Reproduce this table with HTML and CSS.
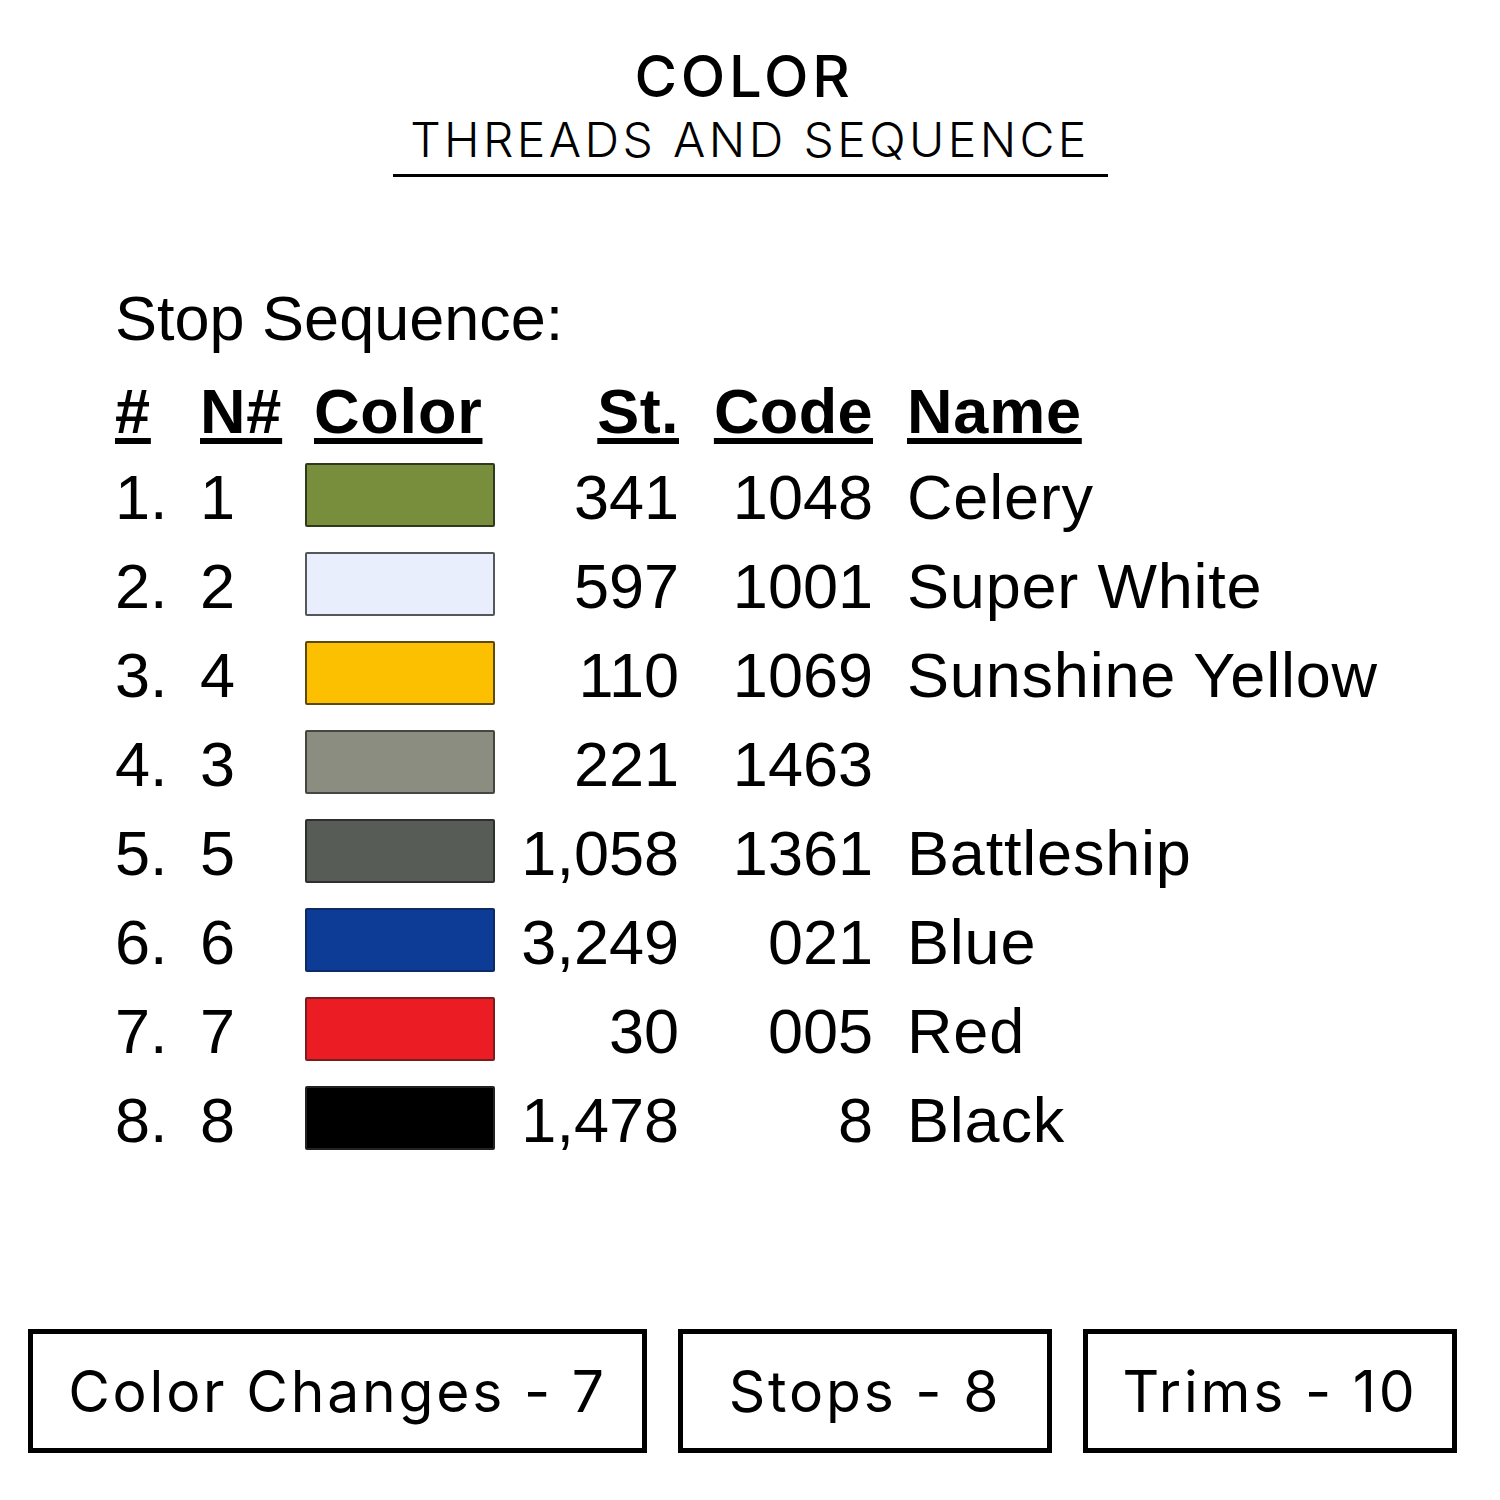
FILE: index.html
```html
<!DOCTYPE html>
<html>
<head>
<meta charset="utf-8">
<link rel="stylesheet" href="styles.css">
</head>
<body>
<div class="page">
  <header class="title-block">
    <div class="title">COLOR</div>
    <div class="subtitle">THREADS AND SEQUENCE</div>
  </header>

  <section class="sequence">
    <div class="seq-title">Stop Sequence:</div>
    <div class="grid">
      <div class="row head">
        <span class="c1"><u>#</u></span>
        <span class="c2"><u>N#</u></span>
        <span class="c3 head-color"><u>Color</u></span>
        <span class="c4"><u>St.</u></span>
        <span class="c5"><u>Code</u></span>
        <span class="c6"><u>Name</u></span>
      </div>
      <div class="row">
        <span class="c1">1.</span><span class="c2">1</span>
        <span class="c3"><i class="swatch celery"></i></span>
        <span class="c4">341</span><span class="c5">1048</span><span class="c6">Celery</span>
      </div>
      <div class="row">
        <span class="c1">2.</span><span class="c2">2</span>
        <span class="c3"><i class="swatch white"></i></span>
        <span class="c4">597</span><span class="c5">1001</span><span class="c6">Super White</span>
      </div>
      <div class="row">
        <span class="c1">3.</span><span class="c2">4</span>
        <span class="c3"><i class="swatch yellow"></i></span>
        <span class="c4">110</span><span class="c5">1069</span><span class="c6">Sunshine Yellow</span>
      </div>
      <div class="row">
        <span class="c1">4.</span><span class="c2">3</span>
        <span class="c3"><i class="swatch gray"></i></span>
        <span class="c4">221</span><span class="c5">1463</span><span class="c6"></span>
      </div>
      <div class="row">
        <span class="c1">5.</span><span class="c2">5</span>
        <span class="c3"><i class="swatch battleship"></i></span>
        <span class="c4">1,058</span><span class="c5">1361</span><span class="c6">Battleship</span>
      </div>
      <div class="row">
        <span class="c1">6.</span><span class="c2">6</span>
        <span class="c3"><i class="swatch blue"></i></span>
        <span class="c4">3,249</span><span class="c5">021</span><span class="c6">Blue</span>
      </div>
      <div class="row">
        <span class="c1">7.</span><span class="c2">7</span>
        <span class="c3"><i class="swatch red"></i></span>
        <span class="c4">30</span><span class="c5">005</span><span class="c6">Red</span>
      </div>
      <div class="row">
        <span class="c1">8.</span><span class="c2">8</span>
        <span class="c3"><i class="swatch black"></i></span>
        <span class="c4">1,478</span><span class="c5">8</span><span class="c6">Black</span>
      </div>
    </div>
  </section>

  <footer class="stats">
    <div class="stat wide">Color Changes - 7</div>
    <div class="stat">Stops - 8</div>
    <div class="stat">Trims - 10</div>
  </footer>
</div>
</body>
</html>
```

FILE: styles.css
```css
html, body {
  margin: 0;
  padding: 0;
  background: #ffffff;
}

.page {
  width: 1500px;
  height: 1500px;
  display: flex;
  flex-direction: column;
  color: #000;
}

.title-block {
  width: 715px;
  margin: 0 auto;
  padding-top: 43px;
  padding-bottom: 6px;
  border-bottom: 3px solid #000;
  display: flex;
  flex-direction: column;
  align-items: center;
  font-family: Inter, "DejaVu Sans", sans-serif;
}

.title {
  font-size: 58px;
  line-height: 66px;
  font-weight: 500;
  letter-spacing: 3.8px;
  margin-right: 12px;
}

.subtitle {
  margin-top: 3px;
  font-size: 48px;
  line-height: 56px;
  font-weight: 300;
  letter-spacing: 3.4px;
}

.sequence {
  margin-top: 106px;
  padding-left: 115px;
  font-family: "Liberation Sans", Arial, sans-serif;
  font-size: 63px;
}

.seq-title {
  line-height: 70px;
}

.grid {
  margin-top: 17px;
  display: flex;
  flex-direction: column;
}

.row {
  display: grid;
  grid-template-columns: 85px 105px 190px 184px 194px auto;
  height: 89px;
  line-height: 89px;
  align-items: center;
  white-space: nowrap;
}

.row.head {
  height: 83px;
  line-height: 83px;
  font-weight: bold;
  letter-spacing: 0.8px;
}

.row.head u {
  text-decoration-thickness: 6px;
  text-underline-offset: 5px;
}

.row.head .c4,
.row.head .c5 {
  letter-spacing: 0.4px;
}

.head-color {
  padding-left: 9px;
}

.c4, .c5 {
  text-align: right;
}

.c6 {
  padding-left: 34px;
  letter-spacing: 0.8px;
}

.c3 {
  display: flex;
  align-items: center;
  height: 100%;
}

.swatch {
  display: block;
  width: 190px;
  height: 64px;
  box-sizing: border-box;
  border: 2px solid #3e4038;
  border-radius: 2px;
  margin-bottom: 6px;
}

.celery { background: #788e3c; border-color: #2f3a1c; }
.white { background: #e8eefc; border-color: #55575c; }
.yellow { background: #fcc000; border-color: #5a4a10; }
.gray { background: #8a8d80; border-color: #44463f; }
.battleship { background: #585c56; border-color: #2e302d; }
.blue { background: #0d3c97; border-color: #0c2a66; }
.red { background: #ec1c24; border-color: #7a1d20; }
.black { background: #000000; border-color: #222; }

.stats {
  margin-top: auto;
  margin-bottom: 47px;
  padding-left: 28px;
  display: flex;
  gap: 31px;
  font-family: Inter, "DejaVu Sans", sans-serif;
}

.stat {
  width: 374px;
  height: 124px;
  box-sizing: border-box;
  border: 5px solid #000;
  display: flex;
  align-items: center;
  justify-content: center;
  font-size: 57px;
  font-weight: 400;
  letter-spacing: 2.8px;
}

.stat.wide {
  width: 619px;
}
```
